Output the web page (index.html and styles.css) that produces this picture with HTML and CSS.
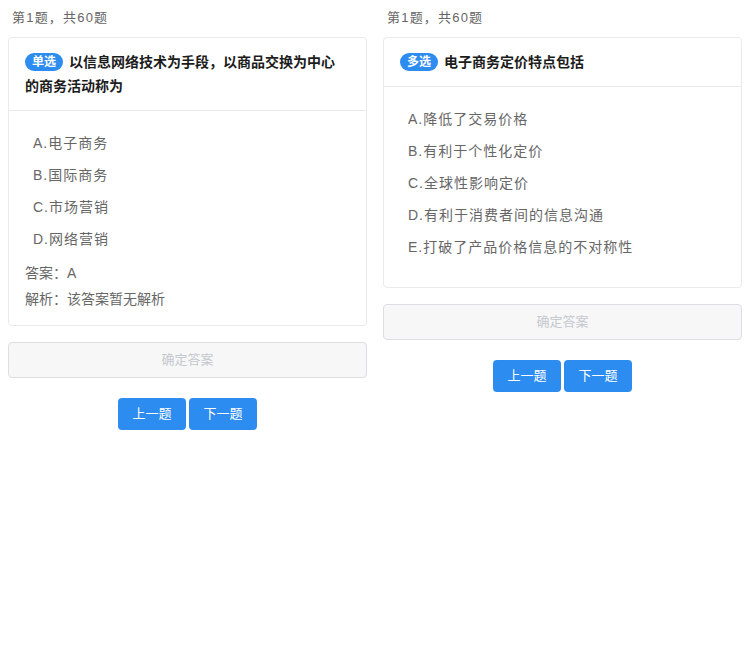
FILE: index.html
```html
<!DOCTYPE html>
<html lang="zh-CN">
<head>
    <meta charset="UTF-8">
    <meta name="viewport" content="width=device-width, initial-scale=1.0">
    <title>在线答题</title>
    <link rel="stylesheet" href="styles.css">
</head>
<body>
    <div class="pages">
        <div class="page">
            <div class="count">第1题，共60题</div>
            <div class="card">
                <div class="card-head">
                    <span class="tag">单选</span>以信息网络技术为手段，以商品交换为中心的商务活动称为
                </div>
                <div class="card-body">
                    <ul class="options">
                        <li>A.电子商务</li>
                        <li>B.国际商务</li>
                        <li>C.市场营销</li>
                        <li>D.网络营销</li>
                    </ul>
                    <div class="answer">答案：A</div>
                    <div class="answer">解析：该答案暂无解析</div>
                </div>
            </div>
            <div class="confirm">确定答案</div>
            <div class="nav">
                <span class="btn">上一题</span>
                <span class="btn">下一题</span>
            </div>
        </div>

        <div class="page">
            <div class="count">第1题，共60题</div>
            <div class="card">
                <div class="card-head">
                    <span class="tag">多选</span>电子商务定价特点包括
                </div>
                <div class="card-body">
                    <ul class="options">
                        <li>A.降低了交易价格</li>
                        <li>B.有利于个性化定价</li>
                        <li>C.全球性影响定价</li>
                        <li>D.有利于消费者间的信息沟通</li>
                        <li>E.打破了产品价格信息的不对称性</li>
                    </ul>
                </div>
            </div>
            <div class="confirm">确定答案</div>
            <div class="nav">
                <span class="btn">上一题</span>
                <span class="btn">下一题</span>
            </div>
        </div>
    </div>
</body>
</html>
```

FILE: styles.css
```css
body { margin: 0; padding: 0; font-family: "Liberation Sans", "Noto Sans CJK SC", sans-serif; color: #333; background: #fff; }
.pages { display: flex; }
.page { width: 375px; padding: 0 8px; box-sizing: border-box; }
.count { padding: 8px 4px 9px; font-size: 13px; line-height: 20px; color: #666; letter-spacing: 1.2px; }
.card { border: 1px solid #e8eaec; border-radius: 4px; background: #fff; }
.card-head { padding: 12px 20px 12px 16px; border-bottom: 1px solid #e8eaec; font-size: 14px; line-height: 24px; font-weight: bold; color: #1c1c1c; }
.tag { display: inline-block; padding: 0 7px; margin-right: 6px; height: 18px; line-height: 18px; border-radius: 9px; background: #2d8cf0; color: #fff; font-size: 12px; font-weight: bold; vertical-align: 1px; }
.card-body { padding: 16px 16px 16px; }
.options { list-style: none; margin: 0 0 8px; padding: 0; }
.options li { padding-left: 8px; line-height: 32px; font-size: 14px; color: #666; letter-spacing: 1px; }
.answer { font-size: 14px; line-height: 20px; color: #666; margin-bottom: 6px; }
.answer:last-child { margin-bottom: 0; }
.confirm { margin-top: 16px; height: 36px; line-height: 34px; box-sizing: border-box; border: 1px solid #dcdee2; border-radius: 4px; background: #f7f7f7; color: #c5c8ce; text-align: center; font-size: 13px; }
.nav { display: flex; justify-content: center; gap: 3px; margin-top: 20px; }
.btn { width: 68px; height: 32px; line-height: 32px; border-radius: 4px; background: #2d8cf0; color: #fff; text-align: center; font-size: 13px; }
```
